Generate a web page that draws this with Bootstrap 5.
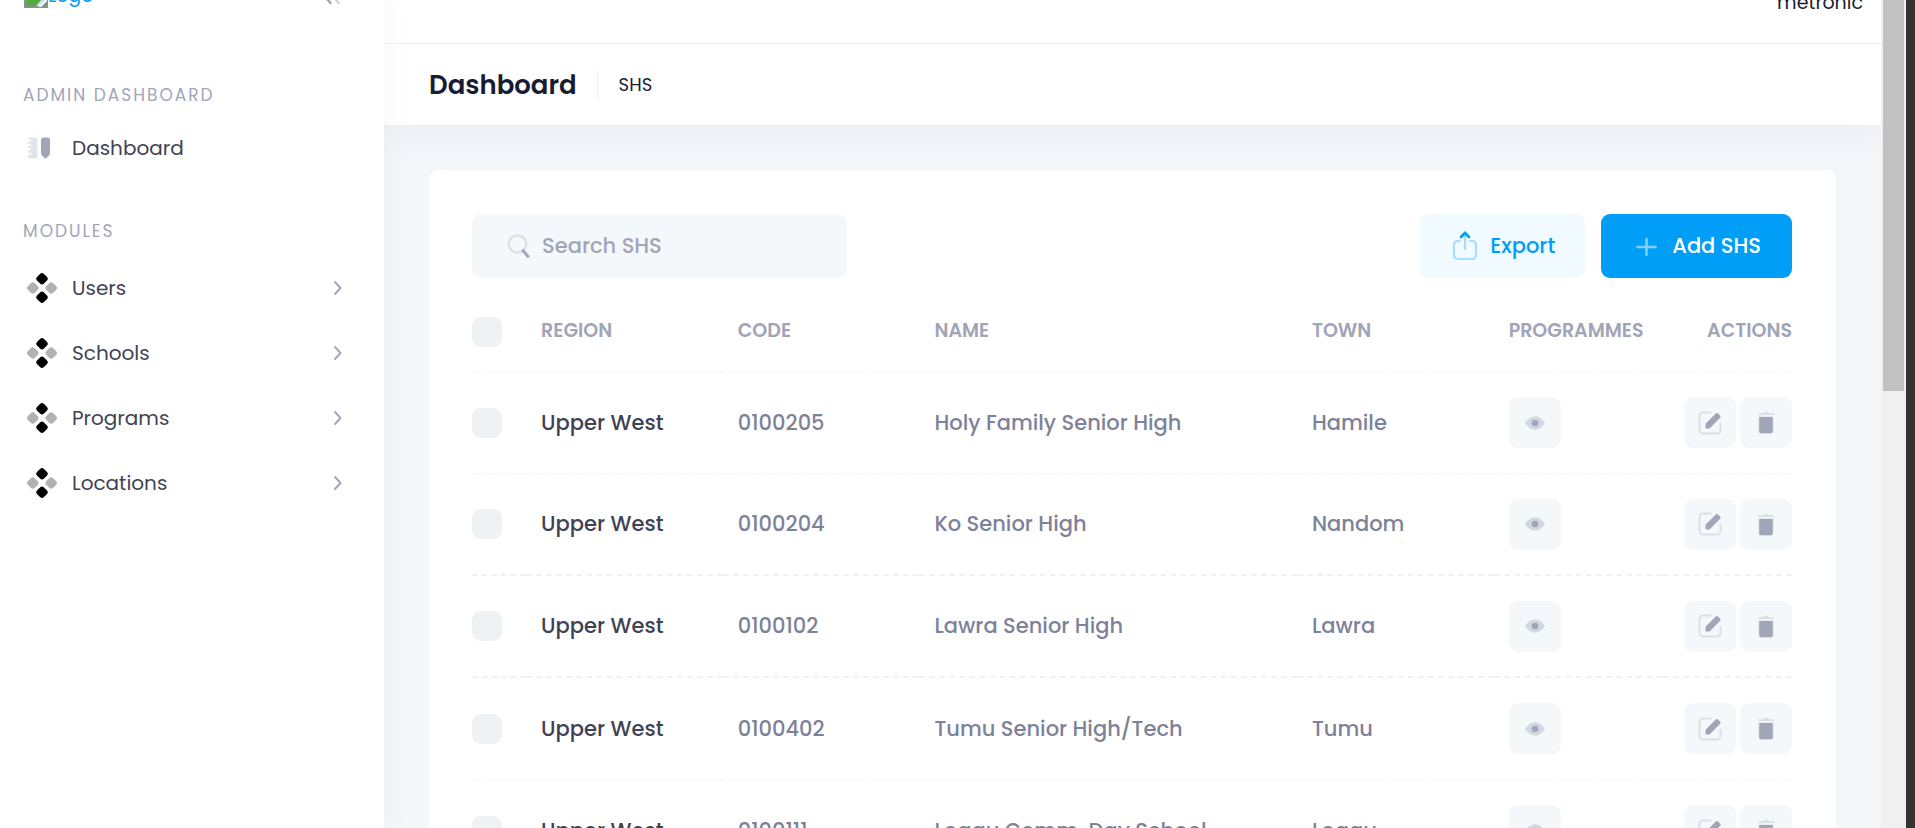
<!DOCTYPE html>
<html lang="en">
<head>
<meta charset="utf-8">
<meta name="viewport" content="width=device-width, initial-scale=1">
<title>Dashboard - SHS</title>
<link href="https://cdn.jsdelivr.net/npm/bootstrap@5.3.0/dist/css/bootstrap.min.css" rel="stylesheet">
<style>
:root{--ink:#181c32;--dark:#3f4254;--soft:#7e8299;--muted:#a1a5b7;--brand:#009ef7;--light:#f5f8fa;--line:#eff2f5}
body{font-family:Poppins,Inter,sans-serif;font-size:19px;color:var(--ink);background:#333}
svg{display:block;flex:none}
a{text-decoration:none}
.shell{height:100vh;overflow:hidden}
.app{background:#f3f7fa}
.side{width:384px;z-index:2;box-shadow:0 0 28px rgba(82,63,105,.05)}
.side-head{height:112px;margin-top:-60px;padding:0 44px 0 24px}
.side-head a{color:var(--brand);line-height:24px}
.plain-btn{border:0;background:none;padding:0}
.side-title{font-size:17px;line-height:24px;letter-spacing:2px;color:var(--muted);padding:0 23px}
.side-title.first{margin:31px 0 8px}
.side-title.next{margin:39px 0 12px}
.side-link{height:65px;padding:0 41px 0 27px;color:var(--dark);font-size:20px}
.side-link .ico{width:45px}
.top{height:104px;margin-top:-60px;border-bottom:1px solid var(--line);padding:0 18px 26px 0}
.crumbs{height:81px;padding:0 45px}
.head-wrap{box-shadow:0 10px 30px rgba(82,63,105,.05)}
.crumbs h1{font-size:26px;font-weight:600;line-height:32px}
.sep{width:1px;height:30px;background:var(--line);margin:0 21px 0 20px}
.crumb{font-size:18px}
.panel{margin:45px 45px 0 45px;padding:44px 44px 0 43px;border-radius:9px;background:#fff;z-index:1}
.search{width:375px;height:64px;border-radius:9px;background:var(--light);padding:0 20px 0 34px}
.search input{border:0;background:none;outline:0;padding:0;color:var(--dark);font-size:21px;font-weight:500}
.search input::placeholder{color:var(--muted);opacity:1}
.act{height:64px;border:0;border-radius:9px;font-size:21px;font-weight:500}
.act-light{background:#f1faff;color:var(--brand);padding:0 30px 0 32px;gap:12px}
.act-main{background:var(--brand);color:#fff;padding:0 31px 0 35px;gap:15px}
.grid{table-layout:fixed;width:100%;margin-top:14px;border-collapse:separate;border-spacing:0}
.grid th,.grid td{padding:0 15px;height:102px;border-bottom:1px dashed var(--line);white-space:nowrap}
.grid tr.thick td{border-bottom-width:2px}
.grid th{height:80px;font-size:19px;font-weight:600;color:var(--muted)}
.grid tr>:first-child{padding:0}
.grid tr>:last-child{padding-right:0}
.grid td{font-size:21px;color:var(--soft);font-weight:500}
.grid td:nth-child(2){color:var(--dark)}
.grid .form-check-input{display:block;width:30px;height:30px;margin:0;border:0;border-radius:9px;background-color:var(--line)}
.w-tick{width:4.1%}.w-std{width:14.9%}.w-name{width:28.6%}.w-prog{width:12.8%}
.sq{width:52px;height:51px;border:0;border-radius:9px;background:var(--light);padding:0;display:flex;align-items:center;justify-content:center}
.track{width:25px;background:#f0f0f0;padding:0 2px}
.thumb{height:391px;background:#c1c1c1}
.edge{width:9px;background:#333}
</style>
<script src="https://cdn.jsdelivr.net/npm/bootstrap@5.3.0/dist/js/bootstrap.bundle.min.js"></script>
</head>
<body>
<svg width="0" height="0" class="position-absolute" aria-hidden="true">
<symbol id="i-four" viewBox="0 0 30 30"><g><rect x="10.200" y="1" width="9.600" height="9.600" rx="2.800" transform="rotate(45 15 5.8)"/><rect x="10.200" y="19.400" width="9.600" height="9.600" rx="2.800" transform="rotate(45 15 24.2)"/></g><g opacity=".3"><rect x="1" y="10.200" width="9.600" height="9.600" rx="2.800" transform="rotate(45 5.8 15)"/><rect x="19.400" y="10.200" width="9.600" height="9.600" rx="2.800" transform="rotate(45 24.2 15)"/></g></symbol>
<symbol id="i-next" viewBox="0 0 10 16"><path d="M2 2l5.500 6L2 14" fill="none" stroke="#a1a5b7" stroke-width="1.900" stroke-linecap="round" stroke-linejoin="round"/></symbol>
<symbol id="i-eye" viewBox="0 0 20 14"><path d="M0 7Q4.500.3 10 .3T20 7Q15.500 13.700 10 13.700T0 7Z" fill="#a1a5b7" opacity=".4"/><circle cx="10" cy="7" r="3.300" fill="#a1a5b7"/></symbol>
<symbol id="i-edit" viewBox="0 0 24 24"><path d="M13.500 1.500H5a3.500 3.500 0 0 0-3.500 3.500v14A3.500 3.500 0 0 0 5 22.500h14a3.500 3.500 0 0 0 3.500-3.500v-7" fill="none" stroke="#a1a5b7" stroke-opacity=".3" stroke-width="2"/><path d="M7.500 17.500v-4.700L18 2.300q1-.8 2 .1l2.300 2.400q.8 1-.1 2L12 17q-.5.500-1.200.5Z" fill="#a1a5b7"/></symbol>
<symbol id="i-bin" viewBox="0 0 16 23"><path d="M.5 5.500h15V20a2.500 2.500 0 0 1-2.500 2.500H3A2.500 2.500 0 0 1 .5 20ZM.5 2.300h4.800q.2-1.600 1.200-1.600h3q1 0 1.200 1.600h4.800q.5 0 .5.800t-.5.800H.5Q0 3.900 0 3.100t.5-.8Z" fill="#a1a5b7" opacity=".3"/><path d="M1.300 6h13.400v14.600q0 1.700-1.700 1.700H3q-1.700 0-1.700-1.700Z" fill="#a1a5b7"/></symbol>
</svg>
<div class="shell d-flex">
  <div class="app d-flex flex-grow-1">
    <aside class="side bg-white flex-shrink-0 position-relative">
      <div class="side-head d-flex align-items-center justify-content-between">
        <a href="#" class="d-flex align-items-center">
          <svg width="24" height="24" viewBox="0 0 24 24"><path d="M1 1h16l6 6v16H1z" fill="#c5dafa" stroke="#8a8f91" stroke-width="2"/><path d="M2 22v-5q7-9 12-4l3 3-5 6zM18 22l4-4v4z" fill="#52ab3a"/><path d="M14 23l9-9v3l-6 6z" fill="#fff"/></svg><span>Logo</span>
        </a>
        <button class="plain-btn" type="button" aria-label="Collapse menu"><svg width="17" height="17" viewBox="0 0 17 17" fill="none" stroke="#a1a5b7" stroke-width="2.500" stroke-linecap="round"><path d="M7.500 1L1.500 8l6 7"/><path d="M15.500 1L10.500 8l5 7" opacity=".5"/></svg></button>
      </div>
      <div class="side-title first text-uppercase">Admin Dashboard</div>
      <nav>
        <a href="#" class="side-link d-flex align-items-center"><span class="ico"><svg width="24" height="22" viewBox="0 0 24 22"><path d="M2 .5h7q1.500 0 1.500 1.500v18q0 1.500-1.500 1.500H2Q1 21.500 1 20v-2.200h3v-2H1v-2.600h3v-2H1V8.800h3v-2H1V4.500h3v-2H1Q1 .5 2 .5Z" fill="#a1a5b7" opacity=".3"/><path d="M14 3q0-2.500 2.500-2.500h4Q23 .5 23 3v12.500q0 2-1.500 3.500l-2 2q-1 .8-2 0l-2-2Q14 17.500 14 15.500Z" fill="#a1a5b7"/></svg></span>Dashboard</a>
        <div class="side-title next text-uppercase">Modules</div>
        <a href="#" class="side-link d-flex align-items-center"><span class="ico"><svg width="30" height="30"><use href="#i-four"/></svg></span><span class="flex-grow-1">Users</span><svg width="10" height="16"><use href="#i-next"/></svg></a>
        <a href="#" class="side-link d-flex align-items-center"><span class="ico"><svg width="30" height="30"><use href="#i-four"/></svg></span><span class="flex-grow-1">Schools</span><svg width="10" height="16"><use href="#i-next"/></svg></a>
        <a href="#" class="side-link d-flex align-items-center"><span class="ico"><svg width="30" height="30"><use href="#i-four"/></svg></span><span class="flex-grow-1">Programs</span><svg width="10" height="16"><use href="#i-next"/></svg></a>
        <a href="#" class="side-link d-flex align-items-center"><span class="ico"><svg width="30" height="30"><use href="#i-four"/></svg></span><span class="flex-grow-1">Locations</span><svg width="10" height="16"><use href="#i-next"/></svg></a>
      </nav>
    </aside>
    <main class="flex-grow-1">
      <div class="head-wrap bg-white">
        <header class="top d-flex align-items-end justify-content-end"><span>metronic</span></header>
        <div class="crumbs d-flex align-items-center"><h1 class="m-0">Dashboard</h1><span class="sep"></span><span class="crumb">SHS</span></div>
      </div>
      <section class="panel position-relative">
        <div class="d-flex justify-content-between">
          <label class="search d-flex align-items-center">
            <svg class="me-2" width="24" height="26" viewBox="0 0 24 26" fill="none" stroke="#a1a5b7"><circle cx="11.500" cy="11" r="8.700" stroke-width="2.300" opacity=".3"/><path d="M17 17.500l5 6" stroke-width="2.900" stroke-linecap="round"/></svg>
            <input type="text" class="w-100 ms-1" placeholder="Search SHS" aria-label="Search SHS">
          </label>
          <div class="d-flex gap-3">
            <button type="button" class="act act-light d-flex align-items-center"><svg width="26" height="30" viewBox="0 0 26 30" fill="none" stroke="#009ef7" stroke-width="2.200" stroke-linecap="round"><path d="M7.500 10H6Q2 10 2 14v10q0 4 4 4h14q4 0 4-4V14q0-4-4-4h-1.500M13 5v13" opacity=".3"/><path d="M9 6l4-4 4 4" stroke-width="2.700"/></svg>Export</button>
            <button type="button" class="act act-main d-flex align-items-center"><svg width="21" height="20" viewBox="0 0 21 20" stroke="#fff" stroke-width="2.600" stroke-linecap="round" opacity=".5"><path d="M1.500 11h18M10.500 3v16"/></svg>Add SHS</button>
          </div>
        </div>
        <table class="grid">
          <thead><tr><th class="w-tick"><input class="form-check-input" type="checkbox" aria-label="Select all"></th><th class="w-std">REGION</th><th class="w-std">CODE</th><th class="w-name">NAME</th><th class="w-std">TOWN</th><th class="w-prog">PROGRAMMES</th><th class="text-end">ACTIONS</th></tr></thead>
          <tbody>
            <tr><td><input class="form-check-input" type="checkbox" aria-label="Select row"></td><td>Upper West</td><td>0100205</td><td>Holy Family Senior High</td><td>Hamile</td><td><button class="sq" type="button" aria-label="View"><svg width="20" height="14"><use href="#i-eye"/></svg></button></td><td><div class="d-flex gap-1 justify-content-end"><button class="sq" type="button" aria-label="Edit"><svg width="24" height="24"><use href="#i-edit"/></svg></button><button class="sq" type="button" aria-label="Delete"><svg width="16" height="23"><use href="#i-bin"/></svg></button></div></td></tr>
            <tr class="thick"><td><input class="form-check-input" type="checkbox" aria-label="Select row"></td><td>Upper West</td><td>0100204</td><td>Ko Senior High</td><td>Nandom</td><td><button class="sq" type="button" aria-label="View"><svg width="20" height="14"><use href="#i-eye"/></svg></button></td><td><div class="d-flex gap-1 justify-content-end"><button class="sq" type="button" aria-label="Edit"><svg width="24" height="24"><use href="#i-edit"/></svg></button><button class="sq" type="button" aria-label="Delete"><svg width="16" height="23"><use href="#i-bin"/></svg></button></div></td></tr>
            <tr class="thick"><td><input class="form-check-input" type="checkbox" aria-label="Select row"></td><td>Upper West</td><td>0100102</td><td>Lawra Senior High</td><td>Lawra</td><td><button class="sq" type="button" aria-label="View"><svg width="20" height="14"><use href="#i-eye"/></svg></button></td><td><div class="d-flex gap-1 justify-content-end"><button class="sq" type="button" aria-label="Edit"><svg width="24" height="24"><use href="#i-edit"/></svg></button><button class="sq" type="button" aria-label="Delete"><svg width="16" height="23"><use href="#i-bin"/></svg></button></div></td></tr>
            <tr><td><input class="form-check-input" type="checkbox" aria-label="Select row"></td><td>Upper West</td><td>0100402</td><td>Tumu Senior High/Tech</td><td>Tumu</td><td><button class="sq" type="button" aria-label="View"><svg width="20" height="14"><use href="#i-eye"/></svg></button></td><td><div class="d-flex gap-1 justify-content-end"><button class="sq" type="button" aria-label="Edit"><svg width="24" height="24"><use href="#i-edit"/></svg></button><button class="sq" type="button" aria-label="Delete"><svg width="16" height="23"><use href="#i-bin"/></svg></button></div></td></tr>
            <tr><td><input class="form-check-input" type="checkbox" aria-label="Select row"></td><td>Upper West</td><td>0100111</td><td>Loggu Comm. Day School</td><td>Loggu</td><td><button class="sq" type="button" aria-label="View"><svg width="20" height="14"><use href="#i-eye"/></svg></button></td><td><div class="d-flex gap-1 justify-content-end"><button class="sq" type="button" aria-label="Edit"><svg width="24" height="24"><use href="#i-edit"/></svg></button><button class="sq" type="button" aria-label="Delete"><svg width="16" height="23"><use href="#i-bin"/></svg></button></div></td></tr>
          </tbody>
        </table>
      </section>
    </main>
  </div>
  <div class="track flex-shrink-0"><div class="thumb"></div></div>
  <div class="edge flex-shrink-0"></div>
</div>
</body>
</html>
